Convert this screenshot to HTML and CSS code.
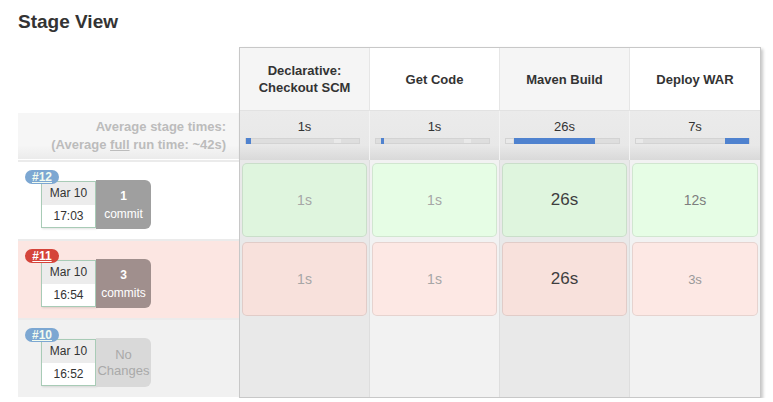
FILE: index.html
```html
<!DOCTYPE html>
<html>
<head>
<meta charset="utf-8">
<title>Stage View</title>
<link rel="stylesheet" href="styles.css">
</head>
<body>
<div class="page">
  <h2 class="title">Stage View</h2>
  <div class="stage-view">
    <div class="builds">
      <div class="builds-head"></div>
      <div class="avg-label">
        <div>Average stage times:</div>
        <div>(Average <u>full</u> run time: ~42s)</div>
      </div>
      <div class="build build-ok">
        <a class="badge badge-blue">#12</a>
        <div class="summary">
          <div class="date"><div class="date-day">Mar 10</div><div class="date-time">17:03</div></div>
          <div class="changes changes-ok"><b>1</b><span>commit</span></div>
        </div>
      </div>
      <div class="build build-failed">
        <a class="badge badge-red">#11</a>
        <div class="summary">
          <div class="date"><div class="date-day">Mar 10</div><div class="date-time">16:54</div></div>
          <div class="changes changes-failed"><b>3</b><span>commits</span></div>
        </div>
      </div>
      <div class="build build-none">
        <a class="badge badge-blue">#10</a>
        <div class="summary">
          <div class="date"><div class="date-day">Mar 10</div><div class="date-time">16:52</div></div>
          <div class="changes changes-none"><span>No</span><span>Changes</span></div>
        </div>
      </div>
    </div>
    <div class="stages">
      <div class="head odd">Declarative:<br>Checkout SCM</div>
      <div class="head even">Get Code</div>
      <div class="head odd">Maven Build</div>
      <div class="head even last">Deploy WAR</div>

      <div class="avg"><span>1s</span><div class="bar"><i class="bar-mark" style="left:78%"></i><i class="bar-fill" style="left:0;width:5px"></i></div></div>
      <div class="avg"><span>1s</span><div class="bar"><i class="bar-mark" style="left:78%"></i><i class="bar-fill" style="left:4%;width:3px"></i></div></div>
      <div class="avg"><span>26s</span><div class="bar"><i class="bar-mark" style="left:0"></i><i class="bar-fill" style="left:7%;width:72%"></i></div></div>
      <div class="avg last"><span>7s</span><div class="bar"><i class="bar-mark" style="left:0"></i><i class="bar-fill" style="left:79%;width:21%"></i></div></div>

      <div class="cell odd"><div class="box ok-odd t-small">1s</div></div>
      <div class="cell even"><div class="box ok-even t-small">1s</div></div>
      <div class="cell odd"><div class="box ok-odd t-large">26s</div></div>
      <div class="cell even last"><div class="box ok-even t-mid">12s</div></div>

      <div class="cell odd"><div class="box fail-odd t-small">1s</div></div>
      <div class="cell even"><div class="box fail-even t-small">1s</div></div>
      <div class="cell odd"><div class="box fail-odd t-large">26s</div></div>
      <div class="cell even last"><div class="box fail-even t-low">3s</div></div>

      <div class="cell odd"></div>
      <div class="cell even"></div>
      <div class="cell odd"></div>
      <div class="cell even last"></div>
    </div>
  </div>
</div>
</body>
</html>
```
FILE: styles.css
```css
body {
  margin: 0;
  background: #fff;
  color: #333;
  font-family: "Liberation Sans", Arial, sans-serif;
}

.page {
  padding: 11px 0 0 18px;
}

.title {
  margin: 0 0 14px;
  font-size: 19px;
  line-height: 22px;
  font-weight: bold;
  color: #333;
}

.stage-view {
  display: flex;
  align-items: flex-start;
}

/* left column */
.builds {
  width: 221px;
}

.builds-head {
  height: 64px;
}

.avg-label {
  box-sizing: border-box;
  height: 46px;
  margin: 2px 0 1px;
  padding-right: 13px;
  display: flex;
  flex-direction: column;
  justify-content: center;
  align-items: flex-end;
  font-size: 13px;
  font-weight: bold;
  line-height: 18px;
  color: #bcbcbc;
  background: linear-gradient(#f6f6f6, #f6f6f6 70%, #ebebeb);
}

.build {
  position: relative;
  box-sizing: border-box;
  height: 79px;
  border-top: 2px solid #ebebeb;
}

.build-ok { background: #fff; }
.build-failed { background: #fce6e2; }
.build-none { background: #f1f1f1; }

.badge {
  position: absolute;
  left: 7px;
  top: 8px;
  z-index: 1;
  width: 34px;
  height: 14px;
  border-radius: 7px;
  font-size: 12px;
  font-weight: bold;
  line-height: 14px;
  text-align: center;
  color: #fff;
  text-decoration: underline;
}

.badge-blue { background: #7ca7d2; color: #f2fbef; }
.badge-red { background: #d5443a; }

.summary {
  display: flex;
  align-items: center;
  margin: 18px 0 0 23px;
}

.date {
  box-sizing: border-box;
  width: 55px;
  border: 1px solid #a8cbb6;
  background: #fff;
  box-shadow: 1px 1px 2px rgba(0, 0, 0, 0.12);
  font-size: 12px;
  text-align: center;
  color: #333;
}

.date-day {
  height: 23px;
  line-height: 23px;
  background: #ececec;
}

.date-time {
  height: 22px;
  line-height: 22px;
}

.changes {
  width: 55px;
  height: 49px;
  border-radius: 0 6px 6px 0;
  display: flex;
  flex-direction: column;
  justify-content: center;
  align-items: center;
  font-size: 12px;
  line-height: 18px;
  color: #fff;
}

.changes-ok { background: #9f9f9f; }
.changes-failed { background: #a08f8d; }
.changes-none {
  background: #d9d9d9;
  color: #a9a9a9;
  font-size: 13px;
  line-height: 16px;
}

/* stage table */
.stages {
  display: grid;
  grid-template-columns: repeat(4, 130px);
  grid-template-rows: 63px 49px 79px 79px 79px;
  border: 1px solid #c8c8c8;
  box-shadow: 2px 2px 3px rgba(0, 0, 0, 0.22);
}

.head {
  box-sizing: border-box;
  display: flex;
  align-items: center;
  justify-content: center;
  padding: 0 10px;
  text-align: center;
  font-size: 13px;
  font-weight: bold;
  line-height: 17px;
  color: #333;
  border-right: 1px solid #e6e6e6;
  border-bottom: 1px solid #e2e2e2;
}

.head.odd { background: #f5f5f5; }
.head.even { background: #fff; }

.avg {
  box-sizing: border-box;
  display: flex;
  flex-direction: column;
  align-items: center;
  padding-top: 8px;
  font-size: 13px;
  line-height: 16px;
  color: #333;
  border-right: 1px solid #f3f3f3;
  background: linear-gradient(#ebebeb, #e8e8e8 70%, #d9d9d9);
}

.bar {
  position: relative;
  box-sizing: border-box;
  align-self: flex-start;
  width: 115px;
  height: 6px;
  margin: 3px 0 0 5px;
  border: 1px solid #d3d3d3;
  background: #dedede;
}

.bar-mark {
  position: absolute;
  top: 0;
  bottom: 0;
  width: 7px;
  background: #e9e9e9;
}

.bar-fill {
  position: absolute;
  top: -1px;
  bottom: -1px;
  background: #4f82cf;
}

.cell {
  box-sizing: border-box;
  padding: 3px 2px 2px;
  border-right: 1px solid #dedede;
}

.cell.odd { background: #e9e9e9; }
.cell.even { background: #f2f2f2; }

.last { border-right: none; }

.box {
  box-sizing: border-box;
  height: 100%;
  display: flex;
  align-items: center;
  justify-content: center;
  border: 1px solid rgba(0, 0, 0, 0.09);
  border-radius: 5px;
}

.ok-odd { background: #dff5de; }
.ok-even { background: #e6fde5; }
.fail-odd { background: #f8e1dc; }
.fail-even { background: #fde8e4; }

.t-small { font-size: 14px; color: #a6a6a6; }
.t-mid { font-size: 14px; color: #7e7e7e; }
.t-large { font-size: 17px; color: #3e3e3e; }
.t-low { font-size: 13px; color: #999; }
```
